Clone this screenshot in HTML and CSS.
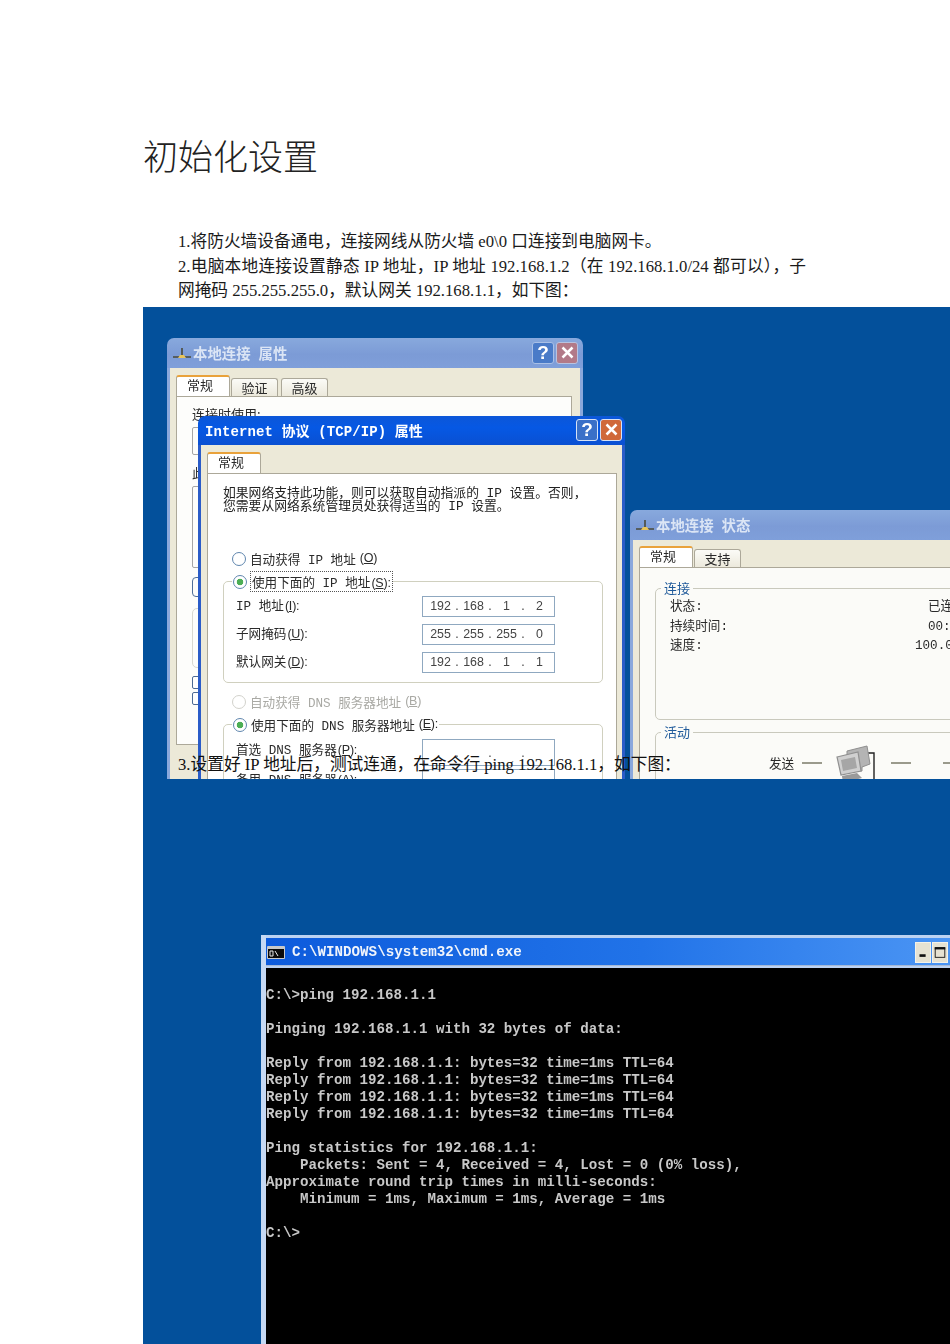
FILE: index.html
```html
<!DOCTYPE html>
<html lang="zh-CN">
<head>
<meta charset="utf-8">
<title>初始化设置</title>
<link rel="stylesheet" href="styles.css">
</head>
<body>
<main class="page">
  <h1 class="title">初始化设置</h1>
  <div class="steps">
    <p>1.将防火墙设备通电&#xFF0C;连接网线从防火墙 e0\0 口连接到电脑网卡。</p>
    <p><span class="line">2.电脑本地连接设置静态 IP 地址&#xFF0C;IP 地址 192.168.1.2&#xFF08;在 192.168.1.0/24 都可以&#xFF09;&#xFF0C;子</span>网掩码 255.255.255.0&#xFF0C;默认网关 192.168.1.1&#xFF0C;如下图&#xFF1A;</p>
  </div>

  <div class="figure-wrap">
    <section class="shot shot-a">
      <div class="win win-back win-props">
        <header class="bar bar-faded">
          <svg class="net" viewBox="0 0 20 14"><path d="M1 11h18M10 2v9" stroke="#4a4a3a" stroke-width="1.6" fill="none"/><path d="M6 12h8l-2-3H8z" fill="#e8c45a"/></svg>
          <span class="bar-title">本地连接&nbsp; 属性</span>
          <span class="btn btn-help btn-faded">?</span>
          <span class="btn btn-close btn-faded-x"><svg viewBox="0 0 12 12"><path d="M2 2l8 8M10 2l-8 8" stroke="#fff" stroke-width="2"/></svg></span>
        </header>
        <div class="body">
          <div class="tabs">
            <span class="tab on">常规</span><span class="tab tab-narrow">验证</span><span class="tab tab-narrow gap">高级</span>
          </div>
          <div class="panel panel-props">
            <div class="t">连接时使用:</div>
            <div class="ghost g1"></div>
            <div class="t t2">此连接使用下列项目:</div>
            <div class="ghost g2"></div>
            <div class="ghost g3"></div>
            <div class="ghost g4"></div>
            <div class="ghost chk"></div>
            <div class="ghost chk"></div>
          </div>
        </div>
      </div>

      <div class="win win-front win-tcp">
        <header class="bar bar-active">
          <span class="bar-title mono">Internet 协议 (TCP/IP) 属性</span>
          <span class="btn btn-help">?</span>
          <span class="btn btn-close"><svg viewBox="0 0 12 12"><path d="M2 2l8 8M10 2l-8 8" stroke="#fff" stroke-width="2"/></svg></span>
        </header>
        <div class="body body-tcp">
          <div class="tabs"><span class="tab on tab-tcp">常规</span></div>
          <div class="panel panel-tcp">
            <p class="intro">如果网络支持此功能&#xFF0C;则可以获取自动指派的 IP 设置。否则&#xFF0C;<br>您需要从网络系统管理员处获得适当的 IP 设置。</p>
            <div class="opt opt-auto"><i class="radio"></i>自动获得 IP 地址<span class="key">(<u>O</u>)</span></div>
            <fieldset class="group group-ip">
              <legend class="opt"><i class="radio sel"></i><span class="focus">使用下面的 IP 地址<span class="key">(<u>S</u>):</span></span></legend>
              <div class="row"><span>IP 地址<span class="key">(<u>I</u>):</span></span><div class="ip"><b>192</b><s>.</s><b>168</b><s>.</s><b>1</b><s>.</s><b>2</b></div></div>
              <div class="row"><span>子网掩码<span class="key">(<u>U</u>):</span></span><div class="ip"><b>255</b><s>.</s><b>255</b><s>.</s><b>255</b><s>.</s><b>0</b></div></div>
              <div class="row"><span>默认网关<span class="key">(<u>D</u>):</span></span><div class="ip"><b>192</b><s>.</s><b>168</b><s>.</s><b>1</b><s>.</s><b>1</b></div></div>
            </fieldset>
            <div class="opt opt-off"><i class="radio off"></i>自动获得 DNS 服务器地址<span class="key">(<u>B</u>)</span></div>
            <fieldset class="group group-dns">
              <legend class="opt"><i class="radio sel"></i>使用下面的 DNS 服务器地址<span class="key">(<u>E</u>):</span></legend>
              <div class="row row-dns"><span>首选 DNS 服务器<span class="key">(<u>P</u>):</span></span><div class="ip ip-dns"><b></b><s>.</s><b></b><s>.</s><b></b><s>.</s><b></b></div></div>
              <div class="row row-dns"><span>备用 DNS 服务器<span class="key">(<u>A</u>):</span></span><div class="ip ip-dns"><b></b><s>.</s><b></b><s>.</s><b></b><s>.</s><b></b></div></div>
            </fieldset>
          </div>
        </div>
      </div>

      <div class="win win-back win-status">
        <header class="bar bar-faded">
          <svg class="net" viewBox="0 0 20 14"><path d="M1 11h18M10 2v9" stroke="#4a4a3a" stroke-width="1.6" fill="none"/><path d="M6 12h8l-2-3H8z" fill="#e8c45a"/></svg>
          <span class="bar-title">本地连接&nbsp; 状态</span>
        </header>
        <div class="body">
          <div class="tabs"><span class="tab on">常规</span><span class="tab tab-narrow">支持</span></div>
          <div class="panel panel-status">
            <fieldset class="group group-conn">
              <legend>连接</legend>
              <div class="stat"><span>状态:</span><span>已连接</span></div>
              <div class="stat"><span>持续时间:</span><span>00:41:25</span></div>
              <div class="stat"><span>速度:</span><span class="speed">100.0 Mbps</span></div>
            </fieldset>
            <fieldset class="group group-act">
              <legend>活动</legend>
              <div class="activity">
                <span class="sent">发送</span><i class="dash"></i>
                <svg class="pcs" viewBox="0 0 42 40">
                  <path d="M30 8h8v32" fill="none" stroke="#222" stroke-width="1.4"/>
                  <path d="M11 6l20-5 3 18-8 3v4l-15-1z" fill="#b4b4b4" stroke="#8f8f8f"/>
                  <path d="M1 12l21-5 3 19-20 4z" fill="#d0d0d0" stroke="#909090" stroke-width="1.2"/>
                  <path d="M5 15l14-3 2 11-14 3z" fill="#a6a6a6"/>
                  <path d="M6 31l15-3 5 5-19 5z" fill="#9a9a9a"/>
                </svg>
                <i class="dash dash-b"></i><i class="dash dash-c"></i>
              </div>
            </fieldset>
          </div>
        </div>
      </div>
    </section>
    <p class="step-over">3.设置好 IP 地址后&#xFF0C;测试连通&#xFF0C;在命令行 ping 192.168.1.1&#xFF0C;如下图&#xFF1A;</p>
  </div>

  <section class="shot shot-b">
    <div class="cmd">
      <header class="cmd-bar">
        <svg class="cmd-ico" viewBox="0 0 18 13"><rect width="18" height="13" rx="1" fill="#c9c9c9"/><rect x="1" y="3" width="16" height="9" fill="#0b0b0b"/><path d="M3 5h3v5H3zM8 5l3 5" stroke="#e8e8e8" fill="none"/></svg>
        <span class="cmd-title">C:\WINDOWS\system32\cmd.exe</span>
        <span class="cmd-btn"><svg viewBox="0 0 16 20"><rect x="4" y="12" width="7" height="3" fill="#111"/></svg></span>
        <span class="cmd-btn"><svg viewBox="0 0 16 20"><rect x="2.5" y="4.5" width="11" height="11" fill="none" stroke="#111"/><rect x="2" y="4" width="12" height="2.5" fill="#111"/></svg></span>
      </header>
      <pre class="console">

C:\&gt;ping 192.168.1.1

Pinging 192.168.1.1 with 32 bytes of data:

Reply from 192.168.1.1: bytes=32 time=1ms TTL=64
Reply from 192.168.1.1: bytes=32 time=1ms TTL=64
Reply from 192.168.1.1: bytes=32 time=1ms TTL=64
Reply from 192.168.1.1: bytes=32 time=1ms TTL=64

Ping statistics for 192.168.1.1:
    Packets: Sent = 4, Received = 4, Lost = 0 (0% loss),
Approximate round trip times in milli-seconds:
    Minimum = 1ms, Maximum = 1ms, Average = 1ms

C:\&gt;</pre>
    </div>
  </section>
</main>
</body>
</html>
```
FILE: styles.css
```css
* { box-sizing: border-box; }
html, body { margin: 0; height: 1344px; overflow: hidden; background: #fff; }
body { font-family: "Liberation Serif", "Noto Sans CJK SC", serif; color: #1a1a1a; }

.page { width: 950px; height: 1344px; padding: 137px 0 0 143px; overflow: hidden; }

.title {
  margin: 0;
  font-size: 35px;
  line-height: 44px;
  font-weight: 300;
  color: #222;
}

.steps { margin: 49px 0 0 35px; width: 628px; }
.steps p { margin: 0; font-size: 16.7px; line-height: 24.7px; }
.line { display: block; text-align: justify; text-align-last: justify; }

.figure-wrap { position: relative; margin-top: 2.9px; width: 807px; height: 472px; }
.step-over {
  position: absolute;
  left: 35px;
  top: 446px;
  z-index: 5;
  margin: 0;
  font-size: 16.7px;
  line-height: 24px;
  color: #111;
  white-space: nowrap;
}

.shot { position: relative; width: 807px; overflow: hidden; background: #03509b; }
.shot-a { height: 472px; }
.shot-b { height: 565px; }

/* Dialog windows */
.win {
  position: absolute;
  font-family: "Liberation Mono", "Noto Sans CJK SC", monospace;
  font-size: 12.6px;
  color: #2a2a2a;
  filter: blur(0.35px);
}
.win-props { left: 24px; top: 31px; width: 416px; height: 460px; z-index: 1; }
.win-tcp { left: 55px; top: 109px; width: 427px; height: 400px; z-index: 2; }
.win-status { left: 487px; top: 203px; width: 400px; height: 300px; z-index: 3; }
.win-status .body { padding-top: 6px; }

.key { font-family: "Liberation Sans", sans-serif; font-size: 12.5px; letter-spacing: -0.2px; margin-left: 1px; }

.bar {
  display: flex;
  align-items: center;
  height: 30px;
  padding: 0 5px 1px;
  border-radius: 7px 7px 0 0;
  gap: 1px;
}
.bar-faded { background: linear-gradient(#88a9dd, #7c9bd6 55%, #7f9fda); }
.bar-active { height: 29px; padding: 0 3px 2px 7px; background: linear-gradient(#0c57d8, #0658e4 40%, #0a50d2); }
.net { width: 20px; height: 14px; flex: none; }
.bar-title {
  flex: 1;
  font-family: "Liberation Sans", "Noto Sans CJK SC", sans-serif;
  font-size: 14.4px;
  font-weight: 700;
  color: #dbe5f5;
  white-space: nowrap;
}
.bar-title.mono { font-family: "Liberation Mono", "Noto Sans CJK SC", monospace; font-size: 14px; color: #fff; letter-spacing: 0.1px; }
.btn {
  flex: none;
  display: flex;
  align-items: center;
  justify-content: center;
  width: 22px;
  height: 22px;
  margin-left: 1px;
  border: 1px solid #d6e2f6;
  border-radius: 3px;
  font: 700 19px "Liberation Sans", sans-serif;
  color: #fff;
}
.btn svg { width: 15px; height: 15px; }
.btn-help { background: #3a70c8; }
.btn-close { background: #d0693a; }
.btn-faded { background: #4a7bc8; border-color: #a9c0e6; }
.btn-faded-x { background: #b27a88; border-color: #b7c3e0; }

.body { height: 100%; background: #ece9d8; padding: 7px 6px; border: solid #8aa8dc; border-width: 0 3px; }
.body-tcp { padding: 7px 5px 7px 6px; border-color: #2a5cc8; }

.tabs { display: flex; align-items: flex-end; height: 21px; }
.tab {
  display: flex;
  align-items: center;
  justify-content: center;
  width: 47px;
  height: 18px;
  padding-bottom: 1px;
  background: linear-gradient(#fbfbf7, #ece9dc);
  border: 1px solid #aca899;
  border-bottom: 0;
  border-radius: 3px 3px 0 0;
  font-family: "Noto Sans CJK SC", sans-serif;
  font-size: 13px;
}
.tab.on {
  width: 54px;
  height: 21px;
  padding: 0 6px 5px 0;
  background: #fff;
  border-top: 2px solid #e9a23b;
}
.tab.gap { margin-left: 3px; }
.tab-narrow { margin-left: 1px; }
.tab-tcp { width: 55px; }

.panel { background: #fff; border: 1px solid #aca899; }
.panel-props { height: 349px; width: 396px; padding: 9px 15px; background: #fdfdfb; }
.panel-props .t { font-size: 13px; line-height: 16px; font-family: "Noto Sans CJK SC", sans-serif; }
.panel-props .t2 { margin-top: 10px; }
.ghost { border: 1px solid #a6a6a6; width: 300px; border-radius: 2px; }
.g1 { height: 28px; margin-top: 5px; }
.g2 { height: 82px; margin-top: 5px; }
.g3 { height: 20px; margin-top: 9px; border-color: #4f6f99; border-radius: 4px; }
.g4 { height: 60px; margin: 11px 0 8px; border-color: #d8d8d0; border-radius: 5px; }
.chk { height: 13px; margin-top: 3px; border-color: #4c6a94; background: #fff; }

.panel-tcp { height: 340px; padding: 13px 14px 0 15px; background: #fff; }
.intro { margin: 0; font-size: 12.8px; line-height: 13px; white-space: nowrap; color: #222; }
.opt {
  display: flex;
  align-items: center;
  gap: 3px;
  height: 16px;
  padding-bottom: 2px;
  font-size: 12.6px;
  white-space: nowrap;
}
.opt-auto { margin: 38px 0 0 9px; }
.opt-off { margin: 11px 0 0 9px; color: #a9a9a4; }
.radio {
  flex: none;
  width: 14px;
  height: 14px;
  margin: 2px 1px 0 0;
  border: 1.5px solid #5f86ae;
  border-radius: 50%;
  background: #fff;
}
.radio.sel { background: radial-gradient(circle, #4cae55 0 3px, #fff 3.6px); }
.radio.off { border-color: #d2d2cc; }
.focus { outline: 1px dotted #555; padding: 0 1px; }

.group { margin: 6px 0 0 0; padding: 3px 47px 0 12px; border: 1px solid #d0d0bf; border-radius: 5px; min-width: 0; }
.group legend { padding: 0 1px; margin-left: -4px; }
.group-ip { height: 110px; width: 380px; }
.group-dns { margin-top: 6px; height: 120px; width: 380px; padding-top: 7px; }
.row { display: flex; justify-content: space-between; align-items: center; height: 28px; }
.row > span { padding-bottom: 3px; }
.row-dns { height: 30px; align-items: flex-start; }
.ip {
  display: flex;
  width: 133px;
  height: 21px;
  padding-left: 5px;
  align-items: center;
  border: 1px solid #8fa8c0;
  background: #fff;
  font-family: "Liberation Sans", sans-serif;
  font-size: 12.4px;
  color: #444;
}
.ip-dns { height: 27px; }
.ip b { width: 25px; font-weight: 400; text-align: center; }
.ip s { width: 8px; text-decoration: none; text-align: center; }

/* Status window */
.panel-status { height: 240px; padding: 12px 15px; background: #fbfbf8; border-right: 0; }
.panel-status .group { margin: 0; width: 340px; }
.panel-status .group-conn { height: 140px; padding: 2px 9px 0 0; border-color: #c9c9bd; }
.panel-status legend { font-family: "Noto Sans CJK SC", sans-serif; font-size: 13px; line-height: 16px; color: #1f5a9a; padding: 0 3px; margin-left: 5px; }
.panel-status .group-act { margin-top: 4px; height: 90px; padding: 0; border-color: #c9c9bd; }
.stat { display: grid; grid-template-columns: 258px auto; justify-content: start; height: 19.5px; margin-left: 14px; line-height: 19px; white-space: nowrap; }
.speed { margin-left: -13px; }
.activity { display: flex; align-items: flex-start; margin-left: 113px; }
.sent { margin-top: 14px; font-family: "Noto Sans CJK SC", sans-serif; font-size: 12.6px; line-height: 17px; }
.dash { width: 20px; height: 2px; margin: 22px 0 0 8px; background: #9a9a8c; }
.pcs { width: 42px; height: 40px; margin: 5px 0 0 14px; }
.dash-b { margin-left: 13px; }
.dash-c { margin-left: 32px; }

/* Command prompt */
.cmd {
  position: absolute;
  left: 118px;
  top: 156px;
  width: 700px;
  height: 420px;
  padding-top: 3px;
  background: #bcd2f2;
  border-left: 5px solid #c6d9f4;
  filter: blur(0.3px);
}
.cmd-bar {
  display: flex;
  align-items: center;
  height: 28px;
  padding: 1px 2px 0 1px;
  width: 684px;
  background: linear-gradient(90deg, #0d5bdc, #2173e8 55%, #4b95f4);
  border-bottom: 1px solid #a6b9d6;
}
.cmd-ico { width: 18px; height: 13px; flex: none; }
.cmd-title {
  flex: 1;
  margin-left: 7px;
  font-family: "Liberation Mono", monospace;
  font-size: 14.2px;
  font-weight: 700;
  color: #f0f4fb;
  white-space: pre;
}
.cmd-btn {
  flex: none;
  display: block;
  width: 16px;
  height: 21px;
  margin-left: 1px;
  background: #e6e2d2;
  border: 1px solid #f4f2e8;
}
.cmd-btn svg { display: block; width: 100%; height: 100%; }
.console {
  margin: 2px 0 0;
  height: 400px;
  padding: 2px 0 0;
  background: #000;
  color: #c8c8c8;
  font-family: "Liberation Mono", monospace;
  font-size: 14.17px;
  font-weight: 700;
  line-height: 17px;
}
```
